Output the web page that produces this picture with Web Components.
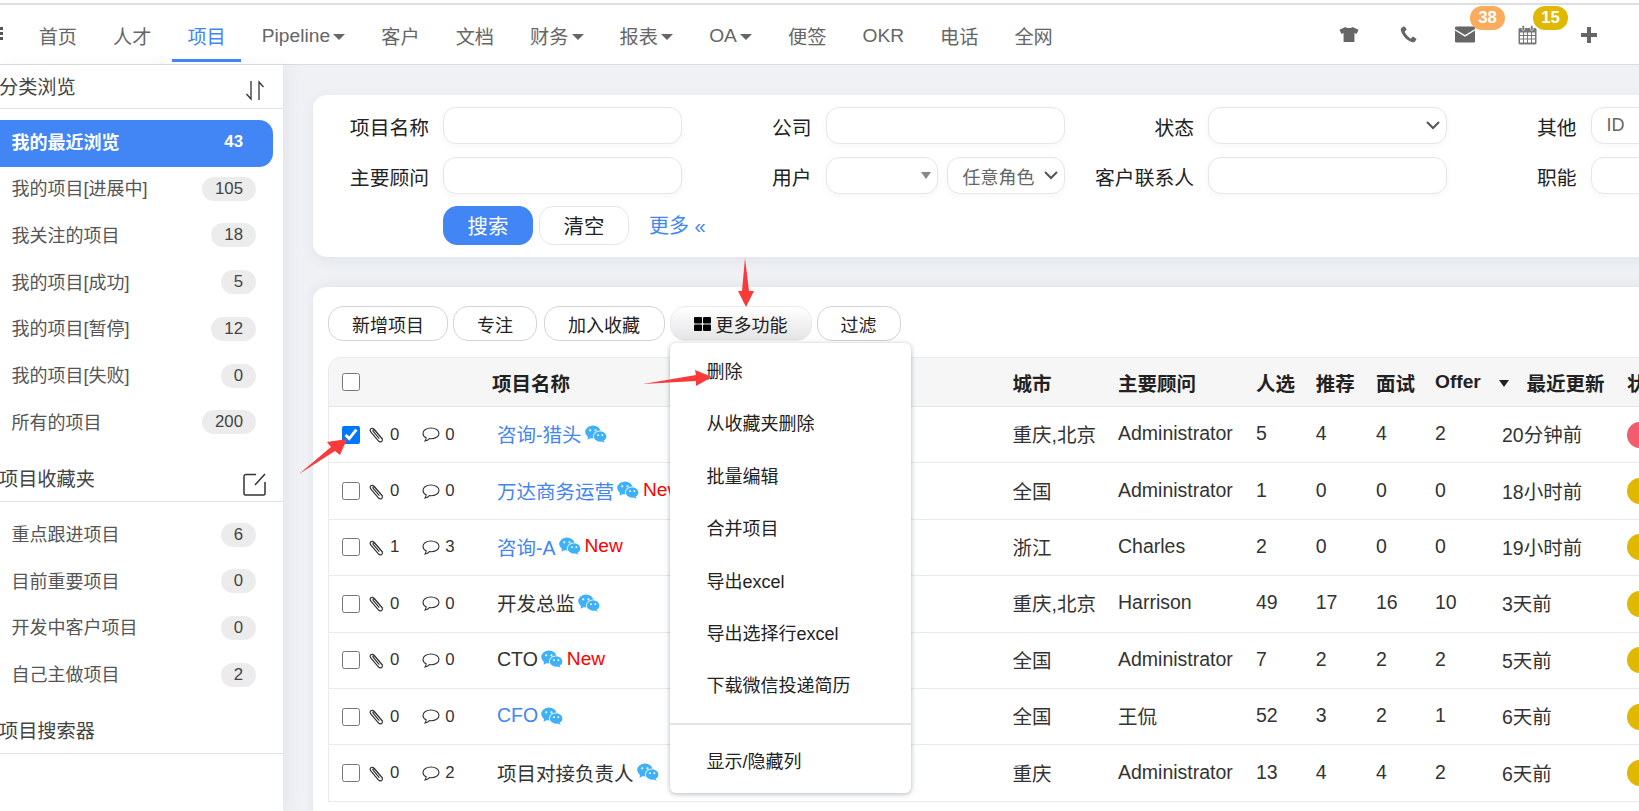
<!DOCTYPE html>
<html lang="zh">
<head>
<meta charset="utf-8">
<title>项目</title>
<style>
  html, body { margin: 0; height: 100%; overflow: hidden; background: #eff1f5; }
  body { font-family: "Liberation Sans", "Noto Sans CJK SC", sans-serif; color: #333; }
</style>
</head>
<body>
<app-shell>
  <top-nav slot="nav"></top-nav>
  <side-bar slot="side"></side-bar>
  <search-panel slot="main"></search-panel>
  <project-panel slot="main"></project-panel>
  <red-arrows slot="over"></red-arrows>
</app-shell>

<script>
const FONT = '"Liberation Sans", "Noto Sans CJK SC", sans-serif';

const WECHAT = `<svg width="22" height="18" viewBox="0 0 21 17" style="flex:none">
  <ellipse cx="7.6" cy="6.6" rx="7.4" ry="6.2" fill="#3fb1f8"/>
  <path d="M3 11l-.6 3 3.4-1.8z" fill="#3fb1f8"/>
  <circle cx="5" cy="5" r="1" fill="#fff"/><circle cx="10" cy="5" r="1" fill="#fff"/>
  <ellipse cx="14.4" cy="10.8" rx="6.8" ry="5.6" fill="#fff"/>
  <ellipse cx="14.4" cy="10.8" rx="6" ry="5" fill="#3fb1f8"/>
  <path d="M17.6 14.4l1.2 2.4-3.6-1.6z" fill="#3fb1f8"/>
  <circle cx="12.4" cy="9.6" r=".9" fill="#fff"/><circle cx="16.6" cy="9.6" r=".9" fill="#fff"/>
</svg>`;

const CLIP = `<svg width="16" height="17" viewBox="0 0 15 16" fill="none" stroke="#333" stroke-width="1.1" style="flex:none">
  <path d="M13 12.6 5.2 3.4C4 2 2.6 1.8 1.7 2.6.8 3.4.9 4.7 2 6l6.6 7.8c1 1.2 2.3 1.5 3.3.8 1-.8.9-2-.1-3.2L5.4 4.2c-.5-.6-1.1-.7-1.5-.4-.4.4-.3.9.2 1.5l5.6 6.6"/>
</svg>`;

const BUBBLE = `<svg width="18" height="17" viewBox="0 0 18 17" fill="none" stroke="#333" stroke-width="1.1" style="flex:none">
  <path d="M9 2C4.6 2 1 4.4 1 7.4c0 1.8 1.3 3.4 3.2 4.4-.1 1.2-.6 2.4-1.2 3.2 1.8-.3 3.4-1.2 4.4-2.4.5.1 1 .1 1.6.1 4.4 0 8-2.3 8-5.3S13.4 2 9 2z"/>
</svg>`;

// page frame: nav on top, sidebar left, panels right
class AppShell extends HTMLElement {
  constructor() {
    super();
    this.attachShadow({ mode: 'open' });
    this.shadowRoot.innerHTML = `
      <style>
        :host { display: block; position: relative; width: 1639px; height: 811px; overflow: hidden; background: #eff1f5; }
        .body { display: flex; height: 746px; }
        .main { flex: 1; min-width: 0; padding: 30px 0 0 29.5px; overflow: hidden; }
      </style>
      <slot name="nav"></slot>
      <div class="body">
        <slot name="side"></slot>
        <div class="main"><slot name="main"></slot></div>
      </div>
      <slot name="over"></slot>`;
  }
}

class TopNav extends HTMLElement {
  constructor() {
    super();
    this.attachShadow({ mode: 'open' });
    const items = [['首页'], ['人才'], ['项目', 'on'], ['Pipeline', 'caret'], ['客户'], ['文档'], ['财务', 'caret'],
      ['报表', 'caret'], ['OA', 'caret'], ['便签'], ['OKR'], ['电话'], ['全网']];
    this.shadowRoot.innerHTML = `
      <style>
        :host { display: flex; align-items: stretch; box-sizing: border-box; height: 65px; padding: 5px 40px 0 0; background: #fff;
          border-bottom: 1px solid #dcdcdc; position: relative; font: 19.2px ${FONT}; color: #666; }
        :host::before { content: ""; position: absolute; left: 0; right: 0; top: 3px; height: 2px; background: #dedede; }
        .ham { width: 3px; margin: 22px 17.7px 0 0; height: 15px; background: repeating-linear-gradient(#555 0 3px, transparent 3px 5px); }
        .item { position: relative; padding: 2px 18px 0; display: flex; align-items: center; white-space: nowrap; }
        .item.on { color: #4285f4; }
        .item.on::after { content: ""; position: absolute; left: 3px; right: 3px; bottom: 2px; height: 3px; background: #4285f4; }
        .item i { display: block; margin: 2px 0 0 3.2px; border: 6px solid transparent; border-top: 6px solid #666; border-bottom: 0; }
        .icons { margin-left: auto; display: flex; align-items: center; }
        .ic { position: relative; width: 20px; height: 20px; display: flex; justify-content: center; align-items: center; margin-top: 0; }
        .badge { position: absolute; top: -19px; height: 24px; width: 35px; border-radius: 12px; color: #fff; font: bold 16.8px/24px ${FONT}; text-align: center; }
      </style>
      <div class="ham"></div>
      ${items.map(([t, f]) => `<div class="item ${f === 'on' ? 'on' : ''}">${t}${f === 'caret' ? '<i></i>' : ''}</div>`).join('')}
      <div class="icons">
        <div class="ic"><svg width="21" height="17" viewBox="0 0 21 17"><path d="M6.8.5C8 2 13 2 14.2.5L20.5 3.5 18.5 8 16.2 7V16.5H4.8V7L2.5 8 .5 3.5z" fill="#666"/></svg></div>
        <div class="ic" style="margin-left:39px"><svg width="17" height="17" viewBox="0 0 17 17"><path d="M3.6.5 1.6 1.8C.6 2.5.6 4 1.2 5.5 2.8 10 7 14.5 11.5 16c1.500.5 2.800.4 3.500-.6l1.200-1.700c.3-.4.2-.9-.2-1.200l-2.600-1.700c-.4-.3-.9-.2-1.200.2l-.9 1.200c-.3.3-.7.4-1 .2C8 11 5.800 8.500 4.800 6.100c-.2-.4-.1-.8.3-1l1.100-.8c.4-.3.5-.8.3-1.200L4.800.8C4.500.4 4 .3 3.600.5z" fill="#666"/></svg></div>
        <div class="ic" style="margin-left:36.5px"><svg width="21" height="17" viewBox="0 0 21 17"><rect width="21" height="17" rx="1.5" fill="#666"/><path d="M0 3.5 10.5 10 21 3.5" fill="none" stroke="#fff" stroke-width="1.5"/></svg>
          <div class="badge" style="left:15.5px;background:#fbab5c">38</div></div>
        <div class="ic" style="margin-left:43px"><svg width="19" height="20" viewBox="0 0 19 20"><rect x=".5" y="3" width="18" height="16.5" rx="1.5" fill="#777"/><g fill="#fff"><rect x="2" y="7.5" width="3" height="2.5"/><rect x="6" y="7.5" width="3" height="2.5"/><rect x="10" y="7.5" width="3" height="2.5"/><rect x="14" y="7.5" width="3" height="2.5"/><rect x="2" y="11" width="3" height="2.5"/><rect x="6" y="11" width="3" height="2.5"/><rect x="10" y="11" width="3" height="2.5"/><rect x="14" y="11" width="3" height="2.5"/><rect x="2" y="14.5" width="3" height="3"/><rect x="6" y="14.5" width="3" height="3"/><rect x="10" y="14.5" width="3" height="3"/><rect x="14" y="14.5" width="3" height="3"/></g><rect x="4" y=".5" width="2.5" height="5" rx="1.2" fill="#777" stroke="#fff" stroke-width=".6"/><rect x="12.5" y=".5" width="2.5" height="5" rx="1.2" fill="#777" stroke="#fff" stroke-width=".6"/></svg>
          <div class="badge" style="left:15.5px;background:#e0b800">15</div></div>
        <div class="ic" style="margin-left:41.5px"><svg width="16" height="16" viewBox="0 0 16 16"><path d="M6 0h4v6h6v4h-6v6H6v-6H0V6h6z" fill="#666"/></svg></div>
      </div>`;
  }
}

class SideHead extends HTMLElement {
  constructor() {
    super();
    this.attachShadow({ mode: 'open' });
    this.shadowRoot.innerHTML = `
      <style>
        :host { display: flex; align-items: flex-end; justify-content: space-between; box-sizing: border-box; border-bottom: 1px solid #dfdfdf;
          padding: 0 17px 8px 0; font-size: 19.2px; line-height: 24px; color: #444; }
        span { margin-left: -1px; }
        ::slotted(svg) { margin-bottom: -1px; }
      </style>
      <span><slot></slot></span><slot name="icon"></slot>`;
  }
}

class SideItem extends HTMLElement {
  static get observedAttributes() { return ['count']; }
  constructor() {
    super();
    this.attachShadow({ mode: 'open' });
    this.shadowRoot.innerHTML = `
      <style>
        :host { display: flex; align-items: center; justify-content: space-between; height: 46.7px; padding: 0 27px 2.5px 11.5px;
          font-size: 18px; color: #555; box-sizing: border-box; }
        :host([active]) { background: #4285f4; color: #fff; font-weight: bold; border-radius: 0 14px 14px 0; width: 273px; padding-right: 17px; }
        span { margin-bottom: 3px; }
        b { font-weight: normal; font-size: 16.8px; min-width: 34px; padding: 0 13px; box-sizing: border-box; height: 24px; line-height: 24px; border-radius: 12px;
          background: #ececec; color: #444; text-align: center; flex: none; }
        :host([active]) b { background: none; color: #fff; font-weight: bold; }
      </style>
      <span><slot></slot></span><b></b>`;
  }
  attributeChangedCallback(n, o, v) { this.shadowRoot.querySelector('b').textContent = v; }
}

class SideBar extends HTMLElement {
  constructor() {
    super();
    this.attachShadow({ mode: 'open' });
    this.shadowRoot.innerHTML = `
      <style>
        :host { display: block; flex: none; width: 283px; background: #fff; box-shadow: 6px 0 14px rgba(40,50,80,.05); position: relative; }
        side-head.a { height: 44px; }
        side-head.b { height: 55.6px; padding-bottom: 9px; }
        side-head.c { height: 55px; padding-bottom: 9px; }
        .list { margin-top: 11px; }
        .list.two { margin-top: 10px; }
      </style>
      <side-head class="a">分类浏览
        <svg slot="icon" width="21" height="21" viewBox="0 0 21 21" fill="none" stroke="#333" stroke-width="1.3"><path d="M6 1v18L1.5 14M14 20V2l4.5 5"/></svg>
      </side-head>
      <div class="list">
        <side-item active count="43">我的最近浏览</side-item>
        <side-item count="105">我的项目[进展中]</side-item>
        <side-item count="18">我关注的项目</side-item>
        <side-item count="5">我的项目[成功]</side-item>
        <side-item count="12">我的项目[暂停]</side-item>
        <side-item count="0">我的项目[失败]</side-item>
        <side-item count="200">所有的项目</side-item>
      </div>
      <side-head class="b">项目收藏夹
        <svg slot="icon" width="23" height="23" viewBox="0 0 23 23" fill="none" stroke="#333" stroke-width="1.5" style="margin-bottom:-4px"><path d="M13 1.5H3A2 2 0 0 0 1 3.5v17a1.5 1.5 0 0 0 1.5 1.5h18a1.5 1.5 0 0 0 1.5-1.5V9M22 1 12 12"/></svg>
      </side-head>
      <div class="list two">
        <side-item count="6">重点跟进项目</side-item>
        <side-item count="0">目前重要项目</side-item>
        <side-item count="0">开发中客户项目</side-item>
        <side-item count="2">自己主做项目</side-item>
      </div>
      <side-head class="c">项目搜索器</side-head>`;
  }
}

class FieldBox extends HTMLElement {
  constructor() {
    super();
    this.attachShadow({ mode: 'open' });
    const kind = this.getAttribute('kind');
    const mark = kind === 'chevron'
      ? '<svg width="14" height="9" viewBox="0 0 14 9" fill="none" stroke="#555" stroke-width="2"><path d="M1 1l6 6 6-6"/></svg>'
      : kind === 'tri' ? '<svg width="10" height="7" viewBox="0 0 10 7"><path d="M0 0h10L5 7z" fill="#888"/></svg>' : '';
    this.shadowRoot.innerHTML = `
      <style>
        :host { display: flex; align-items: center; justify-content: space-between; box-sizing: border-box; height: 37px; border: 1px solid #e6e6e6;
          border-radius: 13px; background: #fff; padding: 0 6px 0 15px; font-size: 18px; color: #666; box-shadow: 0 2px 6px rgba(40,50,80,.04); }
      </style>
      <span><slot></slot></span>${mark}`;
  }
}

class SearchPanel extends HTMLElement {
  constructor() {
    super();
    this.attachShadow({ mode: 'open' });
    this.shadowRoot.innerHTML = `
      <style>
        :host { display: block; box-sizing: border-box; width: 1400px; height: 162px; background: #fff; border-radius: 14px 0 0 14px; padding-top: 12px;
          box-shadow: 0 4px 14px rgba(40,50,80,.07); font-size: 19.8px; color: #222; }
        .grid { display: grid; grid-template-columns: 130.5px 239px 143.5px 239px 143.5px 239px 143.5px 110px; grid-auto-rows: 37px; row-gap: 13px; align-items: center; }
        label { text-align: right; padding: 1px 14px 0 0; white-space: nowrap; }
        .pair { display: flex; gap: 9px; }
        .pair field-box:first-child { width: 112px; flex: none; }
        .pair field-box:last-child { flex: 1; padding-left: 15px; }
        .btns { display: flex; align-items: center; margin: 12px 0 0 130.5px; gap: 6px; }
        button { font: 20.4px ${FONT}; width: 90px; height: 39px; border-radius: 14px; border: 1px solid #e6e6e6; background: #fff; color: #222; padding: 0 0 2px; }
        button.go { background: #4285f4; border-color: #4285f4; color: #fff; }
        a { color: #4285f4; margin: 0 0 3px 14px; font-size: 20px; }
      </style>
      <div class="grid">
        <label>项目名称</label><field-box></field-box>
        <label>公司</label><field-box></field-box>
        <label>状态</label><field-box kind="chevron"></field-box>
        <label>其他</label><field-box>ID</field-box>
        <label>主要顾问</label><field-box></field-box>
        <label>用户</label>
        <div class="pair"><field-box kind="tri"></field-box><field-box kind="chevron">任意角色</field-box></div>
        <label>客户联系人</label><field-box></field-box>
        <label>职能</label><field-box></field-box>
      </div>
      <div class="btns"><button class="go">搜索</button><button>清空</button><a>更多 «</a></div>`;
  }
}

class TbButton extends HTMLElement {
  constructor() {
    super();
    this.attachShadow({ mode: 'open' });
    this.shadowRoot.innerHTML = `
      <style>
        :host { display: flex; align-items: center; justify-content: center; gap: 5px; box-sizing: border-box; height: 35px; border: 1px solid #d4d4d4; border-radius: 15px;
          background: #fff; font-size: 18px; color: #222; }
        :host([open]) { background: linear-gradient(#fff, #e4e4e6); border-color: #ececec; }
      </style>
      <slot></slot>`;
  }
}

class ProjectRow extends HTMLElement {
  constructor() {
    super();
    this.attachShadow({ mode: 'open' });
    const a = n => this.getAttribute(n) || '';
    const isBlue = this.hasAttribute('link');
    this.shadowRoot.innerHTML = `
      <style>
        :host { display: grid; grid-template-columns: var(--cols); height: 56.4px; box-sizing: border-box; border-bottom: 1px solid #e8e9ee; align-items: center;
          font-size: 19.5px; color: #333; white-space: nowrap; }
        div { margin-bottom: 2px; }
        .tick { display: flex; align-items: center; padding-left: 13px; font-size: 16.8px; margin: 0; }
        input { width: 18px; height: 18px; margin: 0 9px 0 0; }
        .tick span { margin-left: 5px; }
        .tick svg:nth-of-type(2) { margin-left: 23px; }
        .name { display: flex; align-items: center; gap: 3px; padding-left: 5px; color: ${isBlue ? '#4285f4' : '#333'}; }
        .new { color: #f00; margin-left: 1px; font-size: 19.2px; }
        .dot { width: 26px; height: 26px; border-radius: 50%; margin: 0; background: ${a('state') === 'red' ? '#f25c6e' : '#e0b800'}; }
        .upd { margin-left: -24.5px; }
      </style>
      <div class="tick"><input type="checkbox" ${this.hasAttribute('checked') ? 'checked' : ''}>${CLIP}<span>${a('files')}</span>${BUBBLE}<span>${a('notes')}</span></div>
      <div class="name"><span>${a('name')}</span>${WECHAT}${this.hasAttribute('fresh') ? '<span class="new">New</span>' : ''}</div>
      <div>${a('city')}</div><div>${a('owner')}</div><div>${a('c')}</div><div>${a('r')}</div><div>${a('m')}</div><div>${a('o')}</div>
      <div class="upd">${a('upd')}</div><div class="dot"></div>`;
  }
}

class ProjectTable extends HTMLElement {
  constructor() {
    super();
    this.attachShadow({ mode: 'open' });
    this.shadowRoot.innerHTML = `
      <style>
        :host { display: block; --cols: 163px 520.6px 105.4px 138px 59.7px 60.3px 59px 91.5px 100.5px 40px; border-left: 1px solid #eaeaee; border-top: 1px solid #eaeaee; border-radius: 14px 0 0 0; overflow: hidden; }
        .head { display: grid; grid-template-columns: var(--cols); height: 49px; box-sizing: border-box; align-items: center; background: #f6f6f6; border-bottom: 1px solid #e6e6ea;
          font-size: 19.5px; font-weight: bold; color: #222; white-space: nowrap; }
        .head input { width: 18px; height: 18px; margin: 0 0 0 13px; display: block; }
        .off i { display: inline-block; border: 5px solid transparent; border-top: 7px solid #222; border-bottom: 0; margin: 2px 0 0 18px; vertical-align: middle; }
        .off { font-size: 19.2px; }
      </style>
      <div class="head">
        <div><input type="checkbox"></div><div>项目名称</div><div>城市</div><div>主要顾问</div><div>人选</div><div>推荐</div><div>面试</div>
        <div class="off">Offer<i></i></div><div>最近更新</div><div>状态</div>
      </div>
      <project-row checked state="red" files="0" notes="0" link name="咨询-猎头" city="重庆,北京" owner="Administrator" c="5" r="4" m="4" o="2" upd="20分钟前"></project-row>
      <project-row files="0" notes="0" link fresh name="万达商务运营" city="全国" owner="Administrator" c="1" r="0" m="0" o="0" upd="18小时前"></project-row>
      <project-row files="1" notes="3" link fresh name="咨询-A" city="浙江" owner="Charles" c="2" r="0" m="0" o="0" upd="19小时前"></project-row>
      <project-row files="0" notes="0" name="开发总监" city="重庆,北京" owner="Harrison" c="49" r="17" m="16" o="10" upd="3天前"></project-row>
      <project-row files="0" notes="0" fresh name="CTO" city="全国" owner="Administrator" c="7" r="2" m="2" o="2" upd="5天前"></project-row>
      <project-row files="0" notes="0" link name="CFO" city="全国" owner="王侃" c="52" r="3" m="2" o="1" upd="6天前"></project-row>
      <project-row files="0" notes="2" name="项目对接负责人" city="重庆" owner="Administrator" c="13" r="4" m="4" o="2" upd="6天前"></project-row>`;
  }
}

class DropMenu extends HTMLElement {
  constructor() {
    super();
    this.attachShadow({ mode: 'open' });
    this.shadowRoot.innerHTML = `
      <style>
        :host { position: absolute; left: 357.5px; top: 56px; width: 241px; box-sizing: border-box; padding: 3px 0 5px; background: #fff; border-radius: 6px;
          box-shadow: 0 1px 5px rgba(30,40,70,.35); font-size: 18px; color: #222; z-index: 5; }
        div { height: 52.4px; line-height: 52.4px; padding-left: 36.5px; }
        hr { border: 0; height: 2px; background: #e4e4e4; margin: 10px 0 11px; }
      </style>
      <div>删除</div><div>从收藏夹删除</div><div>批量编辑</div><div>合并项目</div><div>导出excel</div><div>导出选择行excel</div><div>下载微信投递简历</div>
      <hr>
      <div>显示/隐藏列</div>`;
  }
}

class ProjectPanel extends HTMLElement {
  constructor() {
    super();
    this.attachShadow({ mode: 'open' });
    this.shadowRoot.innerHTML = `
      <style>
        :host { display: block; position: relative; box-sizing: border-box; width: 1400px; height: 600px; margin-top: 30px; padding: 19px 0 0 15.5px;
          background: #fff; border-radius: 14px 0 0 0; box-shadow: 0 -2px 12px rgba(40,50,80,.06); }
        .bar { display: flex; gap: 5px; height: 35px; margin-bottom: 16px; }
        svg { flex: none; }
      </style>
      <div class="bar">
        <tb-button style="width:120px">新增项目</tb-button>
        <tb-button style="width:84px">专注</tb-button>
        <tb-button style="width:121px;margin-left:1.5px">加入收藏</tb-button>
        <tb-button open style="width:142px"><svg width="17" height="14" viewBox="0 0 17 14"><rect width="8" height="6.5" rx="1"/><rect x="9" width="8" height="6.5" rx="1"/><rect y="7.5" width="8" height="6.5" rx="1"/><rect x="9" y="7.5" width="8" height="6.5" rx="1"/></svg>更多功能</tb-button>
        <tb-button style="width:84px">过滤</tb-button>
      </div>
      <project-table></project-table>
      <drop-menu></drop-menu>`;
  }
}

// annotations drawn on top of the screenshot
class RedArrows extends HTMLElement {
  constructor() {
    super();
    this.attachShadow({ mode: 'open' });
    this.shadowRoot.innerHTML = `
      <style>:host { position: absolute; inset: 0; pointer-events: none; z-index: 9; display: block; }</style>
      <svg width="1639" height="811" fill="#f93a3a">
        <polygon points="745,258 749,291 754,291 746,307 738,291 742,291"/>
        <polygon points="643,384 696,375 695,370 712,377 696,386 696,381"/>
        <polygon points="299,474 331,447 327,442 347,439 340,455 335,451"/>
      </svg>`;
  }
}

customElements.define('top-nav', TopNav);
customElements.define('side-head', SideHead);
customElements.define('side-item', SideItem);
customElements.define('side-bar', SideBar);
customElements.define('field-box', FieldBox);
customElements.define('search-panel', SearchPanel);
customElements.define('tb-button', TbButton);
customElements.define('project-row', ProjectRow);
customElements.define('project-table', ProjectTable);
customElements.define('drop-menu', DropMenu);
customElements.define('project-panel', ProjectPanel);
customElements.define('red-arrows', RedArrows);
customElements.define('app-shell', AppShell);
</script>
</body>
</html>
